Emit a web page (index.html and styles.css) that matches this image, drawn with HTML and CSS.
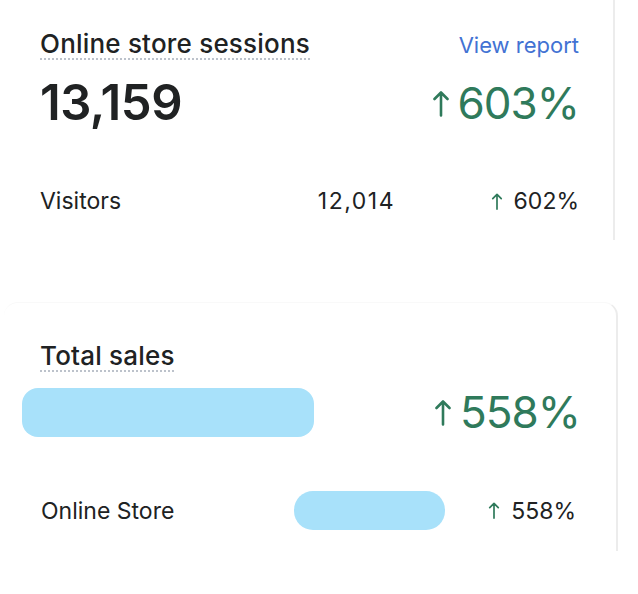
FILE: index.html
```html
<!DOCTYPE html>
<html>
<head>
    <meta charset="UTF-8">
    <title>Analytics</title>
    <link rel="stylesheet" href="styles.css">
</head>
<body>
    <!-- Oturumlar kartı -->
    <div class="card card-sessions">
        <div class="card-head">
            <span class="card-title">Online store sessions</span>
            <a href="#" class="view-report">View report</a>
        </div>
        <div class="metric-row">
            <span class="metric-value">13,159</span>
            <span class="metric-change">
                <svg class="arrow-big" viewBox="0 0 16 26"><path d="M8 25V2M1.5 8.5L8 2l6.5 6.5" fill="none" stroke="currentColor" stroke-width="2.6" stroke-linecap="round" stroke-linejoin="round"/></svg>603%
            </span>
        </div>
        <div class="breakdown-row">
            <span class="breakdown-label">Visitors</span>
            <span class="breakdown-value">12,014</span>
            <span class="breakdown-change">
                <svg class="arrow-small" viewBox="0 0 12 18"><path d="M6 17V1.5M1.5 6L6 1.5 10.5 6" fill="none" stroke="currentColor" stroke-width="1.8" stroke-linecap="round" stroke-linejoin="round"/></svg>602%
            </span>
        </div>
    </div>

    <!-- Satış kartı -->
    <div class="card card-sales">
        <div class="card-head">
            <span class="card-title">Total sales</span>
        </div>
        <div class="metric-row sales-row">
            <span class="blur-mask mask-big"></span>
            <span class="metric-change">
                <svg class="arrow-big" viewBox="0 0 16 26"><path d="M8 25V2M1.5 8.5L8 2l6.5 6.5" fill="none" stroke="currentColor" stroke-width="2.6" stroke-linecap="round" stroke-linejoin="round"/></svg>558%
            </span>
        </div>
        <div class="breakdown-row store-row">
            <span class="breakdown-label">Online Store</span>
            <span class="blur-mask mask-small"></span>
            <span class="breakdown-change">
                <svg class="arrow-small" viewBox="0 0 12 18"><path d="M6 17V1.5M1.5 6L6 1.5 10.5 6" fill="none" stroke="currentColor" stroke-width="1.8" stroke-linecap="round" stroke-linejoin="round"/></svg>558%
            </span>
        </div>
    </div>
</body>
</html>
```

FILE: styles.css
```css
/* Genel stiller */
body {
    margin: 0;
    background-color: white;
    font-family: Inter, "Noto Sans", sans-serif;
    color: #202223;
}

/* Kartlar */
.card {
    box-sizing: border-box;
    background-color: white;
    border-right: 2px solid #ececec;
}

.card-sessions {
    width: 615px;
    height: 240px;
    padding: 28px 34px 0 40px;
}

.card-sales {
    width: 614px;
    height: 249px;
    margin: 62px 0 0 4px;
    padding: 37px 36px 0 36px;
    border-top: 1px solid #f9f9f9;
    border-radius: 14px 14px 0 0;
}

/* Başlık satırı */
.card-head {
    display: flex;
    justify-content: space-between;
    align-items: baseline;
}

.card-title {
    font-size: 26px;
    line-height: 31px;
    font-weight: 500;
    letter-spacing: 0.2px;
    padding-bottom: 1px;
    background: linear-gradient(to right, #bcc2cb 50%, transparent 0) repeat-x left bottom / 4px 2px;
}

.view-report {
    font-size: 22px;
    color: #4272d3;
    text-decoration: none;
}

/* Ana metrik */
.metric-row {
    display: flex;
    justify-content: space-between;
    align-items: center;
    margin-top: 15px;
}

.metric-value {
    font-size: 49px;
    line-height: 56px;
    font-weight: 600;
    letter-spacing: -0.5px;
}

.metric-change {
    display: flex;
    align-items: center;
    font-size: 44px;
    line-height: 54px;
    letter-spacing: -1px;
    color: #2f7a5b;
}

.arrow-big {
    width: 16px;
    height: 27px;
    margin-right: 9px;
}

/* Alt satır */
.breakdown-row {
    display: flex;
    align-items: center;
    margin-top: 56px;
    font-size: 23px;
    line-height: 28px;
}

.breakdown-label {
    flex: 1;
}

.breakdown-value {
    width: 110px;
    text-align: right;
    letter-spacing: 1.5px;
}

.breakdown-change {
    width: 184px;
    display: flex;
    justify-content: flex-end;
    align-items: center;
}

.breakdown-change .arrow-small {
    width: 12px;
    height: 17px;
    margin-right: 11px;
    color: #2f7a5b;
}

/* Gizlenmiş tutarlar */
.blur-mask {
    display: block;
    background-color: #a8e1fa;
}

.sales-row {
    margin-top: 13px;
    margin-left: -18px;
}

.mask-big {
    width: 292px;
    height: 49px;
    border-radius: 16px;
}

.store-row {
    margin-top: 52px;
    padding: 0 4px 0 1px;
}

.mask-small {
    width: 151px;
    height: 39px;
    border-radius: 19px;
}

.store-row .breakdown-change {
    width: 131px;
}
```
